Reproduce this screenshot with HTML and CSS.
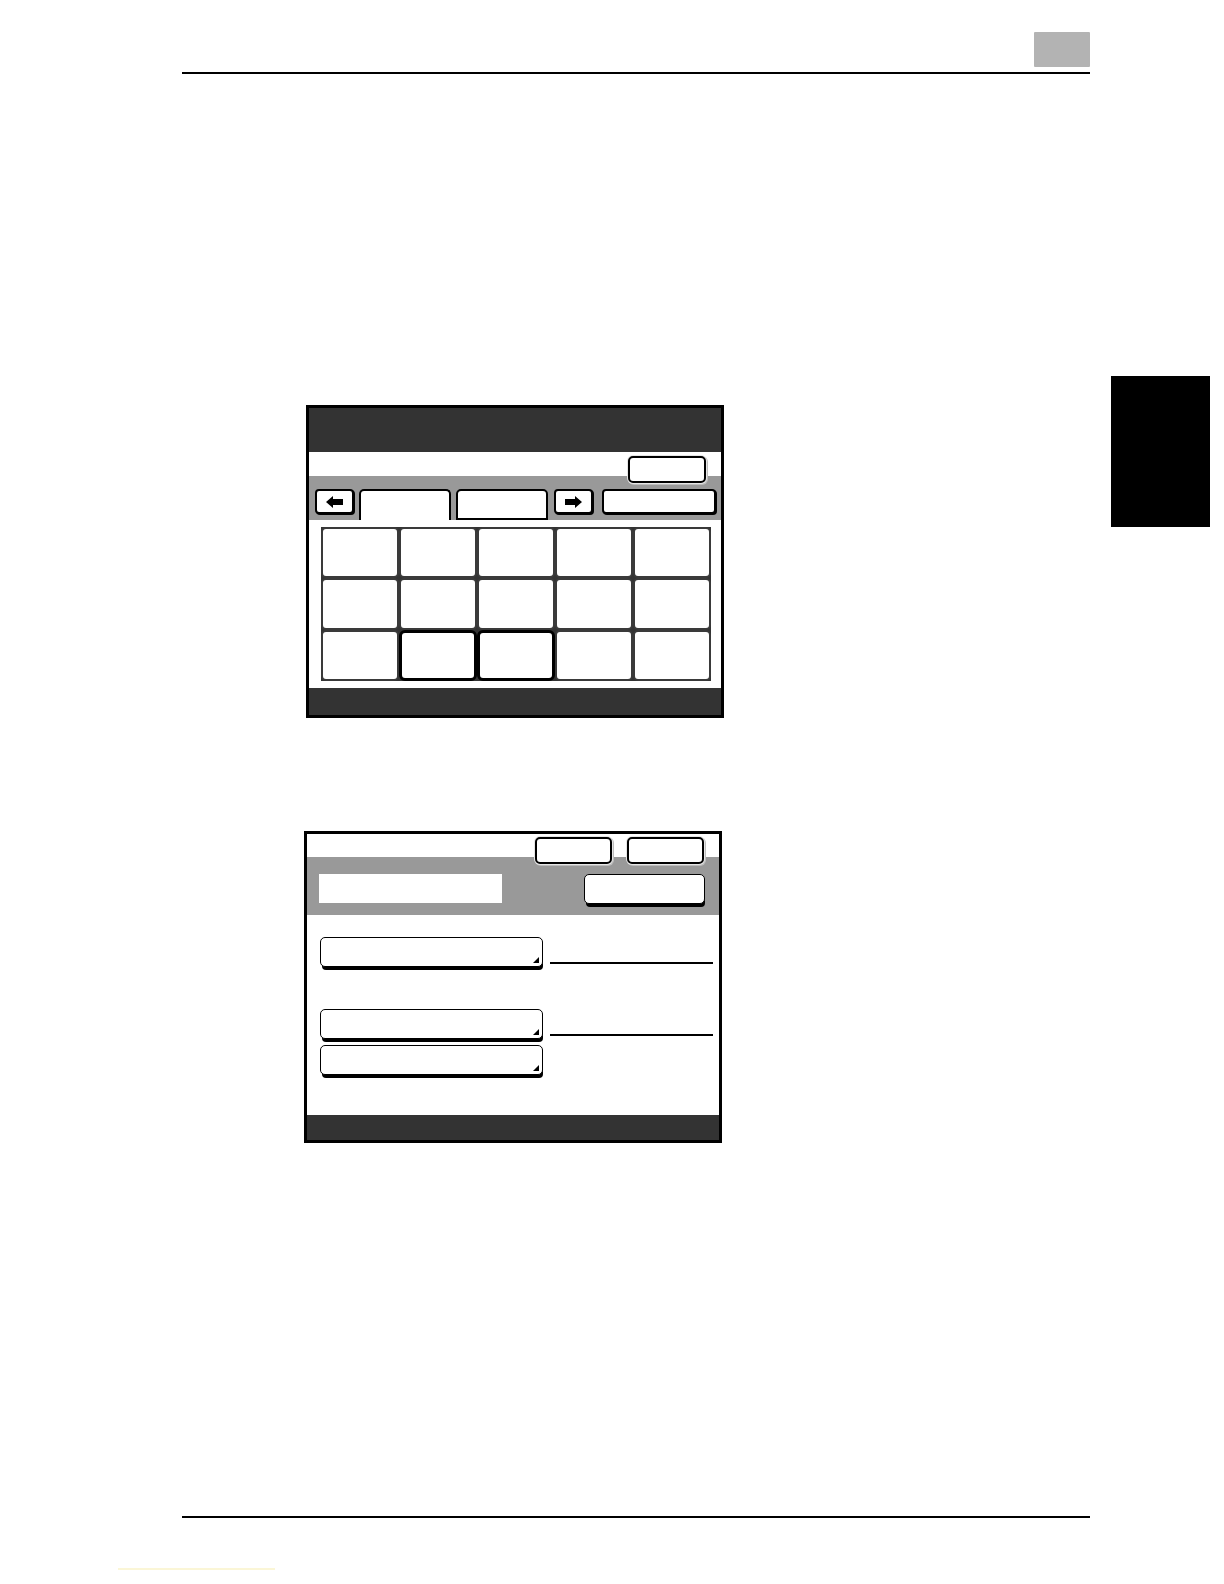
FILE: index.html
```html
<!DOCTYPE html>
<html>
<head>
<meta charset="utf-8">
<title>Screen</title>
<link rel="stylesheet" href="styles.css">
</head>
<body>
<div class="page">
  <header class="header">
    <div class="chapter-box"></div>
    <div class="rule"></div>
  </header>

  <div class="body-row">
    <main class="content">
      <section class="screen screen-one">
        <div class="dark-bar top-bar"></div>
        <div class="white-strip strip-one">
          <div class="btn btn-halo small-btn"></div>
        </div>
        <div class="grey-band tab-band">
          <div class="btn btn-nav nav-left">
            <svg width="17" height="12" viewBox="0 0 17 12"><path d="M0 6 L7 0 L7 3 L17 3 L17 9 L7 9 L7 12 Z" fill="#000"/></svg>
          </div>
          <div class="tab tab-active"></div>
          <div class="tab tab-idle"></div>
          <div class="btn btn-nav nav-right">
            <svg width="17" height="12" viewBox="0 0 17 12"><path d="M17 6 L10 0 L10 3 L0 3 L0 9 L10 9 L10 12 Z" fill="#000"/></svg>
          </div>
          <div class="btn btn-nav wide-btn"></div>
        </div>
        <div class="grid-area">
          <div class="key-grid">
            <div class="key"></div><div class="key"></div><div class="key"></div><div class="key"></div><div class="key"></div>
            <div class="key"></div><div class="key"></div><div class="key"></div><div class="key"></div><div class="key"></div>
            <div class="key"></div><div class="key key-on"></div><div class="key key-on"></div><div class="key"></div><div class="key"></div>
          </div>
        </div>
        <div class="dark-bar bottom-bar"></div>
      </section>

      <section class="screen screen-two">
        <div class="white-strip strip-two">
          <div class="btn btn-halo pair-btn"></div>
          <div class="btn btn-halo pair-btn"></div>
        </div>
        <div class="grey-band field-band">
          <div class="text-field"></div>
          <div class="btn btn-deep ok-btn"></div>
        </div>
        <div class="list-area">
          <div class="list-row">
            <div class="btn btn-deep select-btn"><span class="corner"></span></div>
            <div class="value-line"></div>
          </div>
          <div class="list-row row-gap-big">
            <div class="btn btn-deep select-btn"><span class="corner"></span></div>
            <div class="value-line"></div>
          </div>
          <div class="list-row row-gap-small">
            <div class="btn btn-deep select-btn"><span class="corner"></span></div>
          </div>
        </div>
        <div class="dark-bar bottom-bar-two"></div>
      </section>
    </main>
    <aside class="side">
      <div class="side-tab"></div>
    </aside>
  </div>

  <footer class="footer">
    <div class="rule footer-rule"></div>
    <div class="link-line"></div>
  </footer>
</div>
</body>
</html>
```

FILE: styles.css
```css
html, body {
  margin: 0;
  padding: 0;
  background: #ffffff;
  font-family: "Liberation Sans", Arial, sans-serif;
}

.page {
  width: 1224px;
  height: 1584px;
  padding-top: 32px;
  box-sizing: border-box;
  overflow: hidden;
}

/* header */
.header {
  margin-left: 182px;
  width: 908px;
  display: flex;
  flex-direction: column;
  align-items: flex-end;
}
.chapter-box {
  width: 56px;
  height: 35px;
  background: #b3b3b3;
  border-radius: 1px;
}
.rule {
  width: 908px;
  height: 2px;
  background: #000;
  align-self: flex-start;
}
.header .rule {
  margin-top: 5px;
}

/* body row */
.body-row {
  display: grid;
  grid-template-columns: 1111px 99px;
  height: 1442px;
}
.content {
  display: flex;
  flex-direction: column;
}
.side-tab {
  margin-top: 302px;
  width: 99px;
  height: 151px;
  background: #000;
}

/* screens */
.screen {
  width: 418px;
  border: 3px solid #000;
  box-sizing: border-box;
  display: flex;
  flex-direction: column;
  background: #fff;
}
.screen-one {
  margin-top: 331px;
  margin-left: 306px;
  height: 313px;
}
.screen-two {
  margin-top: 113px;
  margin-left: 304px;
  height: 312px;
}

.dark-bar { background: #333333; }
.top-bar { height: 44px; }
.bottom-bar { height: 27px; }
.bottom-bar-two { height: 25px; }

.white-strip {
  display: flex;
  justify-content: flex-end;
  align-items: flex-start;
  box-sizing: border-box;
  position: relative;
  z-index: 2;
}
.strip-one {
  height: 24px;
  padding-top: 4px;
  padding-right: 15px;
}
.strip-two {
  height: 23px;
  padding-top: 3px;
  padding-right: 15px;
  gap: 15px;
}

.grey-band {
  background: #999999;
  display: flex;
  box-sizing: border-box;
}

/* buttons */
.btn {
  background: #fff;
  border: 2px solid #000;
  box-sizing: border-box;
  border-radius: 5px;
  flex: none;
}
.btn-halo {
  box-shadow: 0 0 0 1px #e6e6e6, 1px 1px 0 1px #bdbdbd;
}
.small-btn {
  width: 78px;
  height: 27px;
}
.pair-btn {
  width: 77px;
  height: 27px;
}

.tab-band {
  height: 44px;
  padding-top: 13px;
  padding-left: 6px;
  align-items: flex-start;
}
.btn-nav {
  height: 25px;
  width: 39px;
  border-radius: 4px;
  box-shadow: 1px 1px 0 #000;
  display: flex;
  align-items: center;
  justify-content: center;
}
.tab {
  height: 31px;
  width: 92px;
  margin-left: 5px;
  background: #fff;
  border: 2px solid #000;
  border-bottom: none;
  border-radius: 5px 5px 0 0;
  box-sizing: border-box;
  flex: none;
}
.tab-idle {
  border-bottom: 2px solid #000;
}
.nav-right { margin-left: 6px; }
.wide-btn {
  width: 114px;
  margin-left: 9px;
}

/* key grid */
.grid-area {
  height: 168px;
  box-sizing: border-box;
  padding: 7px 0 0 12px;
}
.key-grid {
  width: 390px;
  height: 154px;
  background: #333;
  display: grid;
  grid-template-columns: repeat(5, 1fr);
  grid-template-rows: repeat(3, 1fr);
}
.key {
  background: #fff;
  border: 2px solid #3a3a3a;
  border-radius: 5px;
}
.key-on {
  border: 3px solid #000;
  border-radius: 6px;
}

/* screen two */
.field-band {
  height: 58px;
  padding: 17px 14px 0 12px;
  align-items: flex-start;
  justify-content: space-between;
}
.text-field {
  width: 183px;
  height: 29px;
  background: #fff;
}
.btn-deep {
  border-width: 1.5px;
  box-shadow: 1px 4px 0 -1px #000;
}
.ok-btn {
  width: 121px;
  height: 30px;
}

.list-area {
  height: 200px;
  box-sizing: border-box;
  padding: 22px 6px 0 13px;
  display: flex;
  flex-direction: column;
}
.list-row {
  display: flex;
  align-items: flex-end;
}
.row-gap-big { margin-top: 42px; }
.row-gap-small { margin-top: 6px; }

.select-btn {
  width: 223px;
  height: 30px;
  position: relative;
}
.corner {
  position: absolute;
  right: 3px;
  bottom: 3px;
  width: 0;
  height: 0;
  border-left: 6px solid transparent;
  border-bottom: 6px solid #000;
}
.value-line {
  width: 163px;
  height: 2px;
  background: #000;
  margin-left: 7px;
  margin-bottom: 3px;
}

/* footer */
.footer {
  margin-left: 182px;
  display: flex;
  flex-direction: column;
}
.link-line {
  margin-top: 50px;
  margin-left: -64px;
  width: 157px;
  height: 2px;
  background: #fbf6d6;
}
```
